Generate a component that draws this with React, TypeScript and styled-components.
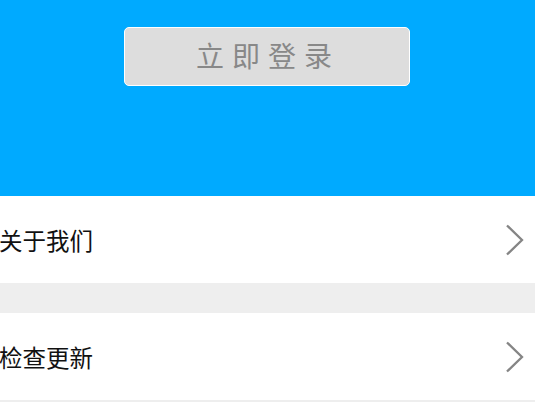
import React from 'react'
import styled, { createGlobalStyle } from 'styled-components'

const GlobalStyle = createGlobalStyle`
  html, body {
    margin: 0;
    padding: 0;
    background: #eeeeee;
    font-family: "Noto Sans CJK SC", "Noto Sans", sans-serif;
  }
`

const items = ['关于我们', '检查更新']

function Chevron() {
  return (
    <svg width="20" height="32" viewBox="0 0 20 32" fill="none">
      <path d="M3 1.5 L18 16 L3 30.5" stroke="#858585" strokeWidth="2.3" />
    </svg>
  )
}

export default function App() {
  return (
    <s.Page>
      <GlobalStyle />
      <s.Header>
        <s.LoginButton type="button">立即登录</s.LoginButton>
      </s.Header>
      <s.List>
        {items.map(label => (
          <s.Row key={label}>
            <s.Label>{label}</s.Label>
            <Chevron />
          </s.Row>
        ))}
      </s.List>
    </s.Page>
  )
}

const s = {
  Page: styled.div`
    width: 535px;
    min-height: 402px;
    background: #eeeeee;
  `,

  Header: styled.div`
    height: 196px;
    background: #00aaff;
    display: flex;
    justify-content: center;
    align-items: flex-start;
    padding-top: 27px;
    box-sizing: border-box;
  `,

  LoginButton: styled.button`
    width: 286px;
    height: 59px;
    margin-left: -1px;
    box-sizing: border-box;
    background: #dddddd;
    border: 1.5px solid #ffffff;
    border-radius: 5px;
    color: #888888;
    font-family: "Noto Sans CJK SC", "Noto Sans", sans-serif;
    font-size: 28px;
    letter-spacing: 8px;
    text-indent: 2px;
    line-height: 1;
    padding: 0 0 4px;
    cursor: pointer;
  `,

  List: styled.div`
    display: flex;
    flex-direction: column;
    gap: 30px;
  `,

  Row: styled.div`
    height: 87px;
    background: #ffffff;
    display: flex;
    align-items: center;
    justify-content: space-between;
    padding: 0 11px 0 0;
  `,

  Label: styled.span`
    font-size: 23.5px;
    color: #111111;
    margin-left: -1px;
  `
}
